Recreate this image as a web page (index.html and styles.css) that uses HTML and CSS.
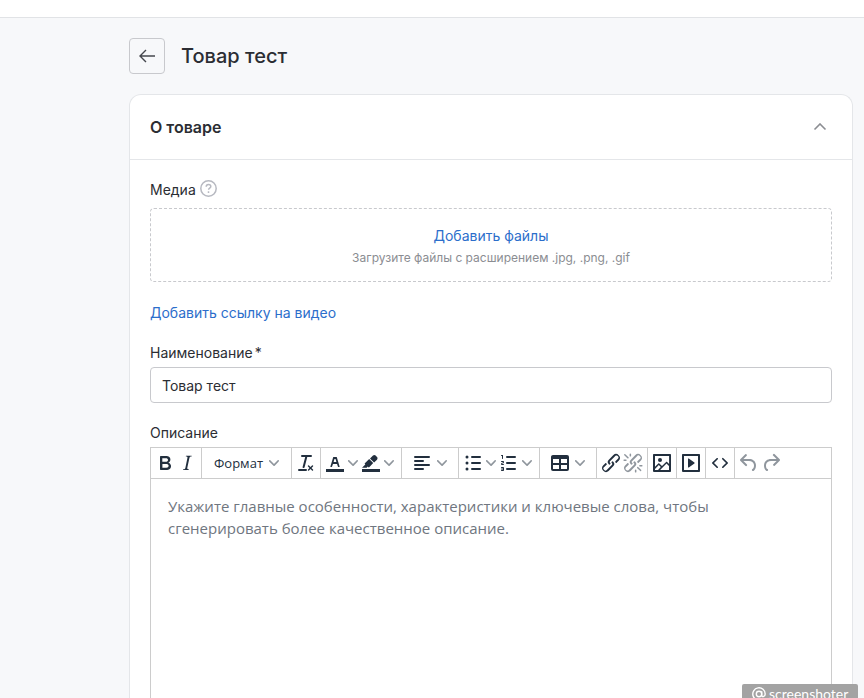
FILE: index.html
```html
<!DOCTYPE html>
<html lang="ru">
<head>
  <meta charset="UTF-8">
  <meta name="viewport" content="width=device-width, initial-scale=1.0">
  <title>Товар тест</title>
  <link rel="stylesheet" href="styles.css">
</head>
<body>
  <header class="topbar"></header>

  <main class="page">
    <div class="page-header">
      <button class="back-button" type="button" aria-label="Назад">
        <svg width="16" height="14" viewBox="0 0 16 14"><path d="M7 1L1 7l6 6M1 7h15"/></svg>
      </button>
      <h1>Товар тест</h1>
    </div>

    <section class="card">
      <div class="card-header">
        <h2>О товаре</h2>
        <button class="collapse-button" type="button" aria-label="Свернуть">
          <svg width="14" height="8" viewBox="0 0 14 8"><path d="M1.500 6.500l5.500-5.500 5.500 5.500"/></svg>
        </button>
      </div>

      <div class="card-body">
        <div class="field">
          <div class="label-row">
            <label for="files">Медиа</label>
            <svg class="help" width="17" height="17" viewBox="0 0 17 17">
              <circle cx="8.5" cy="8.5" r="7.7"/>
              <path d="M6.2 6.8c0-1.4 1-2.3 2.3-2.3s2.3.9 2.3 2.1c0 1.6-2.2 1.6-2.2 3.1M8.5 11.3v1.6"/>
            </svg>
          </div>
          <div class="dropzone">
            <button class="link-button" id="files" type="button">Добавить файлы</button>
            <span class="hint">Загрузите файлы с расширением .jpg, .png, .gif</span>
          </div>
        </div>

        <a class="video-link" href="#">Добавить ссылку на видео</a>

        <div class="field">
          <label for="name">Наименование<span class="required">*</span></label>
          <input class="text-input" type="text" id="name" value="Товар тест">
        </div>

        <div class="field editor-field">
          <label for="description">Описание</label>
          <div class="editor">
            <div class="toolbar">
              <div class="group">
                <button class="tool" type="button" aria-label="Полужирный">
                  <svg class="icon" viewBox="0 0 24 24"><path fill-rule="evenodd" d="M7.8 19c-.3 0-.5 0-.6-.2l-.2-.5V5.7c0-.2 0-.4.2-.5l.6-.2h5c1.5 0 2.7.3 3.5 1 .7.6 1.1 1.4 1.1 2.5a3 3 0 01-.6 1.9c-.4.6-1 1-1.6 1.2.4.1.9.3 1.3.6s.8.7 1 1.2c.4.4.5 1 .5 1.6 0 1.3-.4 2.3-1.3 3-.8.7-2.1 1-3.8 1H7.8zm5-8.3c.6 0 1.2-.1 1.6-.5.4-.3.6-.7.6-1.3 0-1.1-.8-1.7-2.3-1.7H9.3v3.5h3.4zm.5 6c.7 0 1.3-.1 1.7-.4.4-.4.6-.9.6-1.5s-.2-1-.7-1.4c-.4-.3-1-.4-2-.4H9.4v3.8h4z"/></svg>
                </button>
                <button class="tool" type="button" aria-label="Курсив">
                  <svg class="icon" viewBox="0 0 24 24"><path d="M16.7 4.7l-.1.9h-.3c-.6 0-1 0-1.4.3-.3.3-.4.6-.5 1.1l-2.1 9.8v.6c0 .5.4.8 1.4.8h.2l-.2.8H8l.2-.8h.2c1.1 0 1.8-.5 2-1.5l2-9.8.1-.5c0-.6-.4-.8-1.4-.8h-.3l.2-.9h5.8z"/></svg>
                </button>
              </div>
              <div class="group">
                <button class="tool format" type="button">Формат
                  <svg class="chevron" viewBox="0 0 10 10"><path d="M8.7 2.2c.3-.3.8-.3 1 0 .4.4.4.9 0 1.2L5.7 7.8c-.3.3-.9.3-1.2 0L.2 3.4a.8.8 0 010-1.2c.3-.3.8-.3 1.1 0L5 6l3.7-3.8z"/></svg>
                </button>
              </div>
              <div class="group">
                <button class="tool" type="button" aria-label="Очистить формат">
                  <svg class="icon" viewBox="0 0 24 24"><path d="M13.2 6a1 1 0 010 .2l-2.6 10a1 1 0 01-1 .8h-.2a.8.8 0 01-.8-1l2.6-10H8a1 1 0 110-2h9a1 1 0 010 2h-3.8zM5 18h7a1 1 0 010 2H5a1 1 0 010-2zm13 1.5L16.5 18 15 19.5a.7.7 0 01-1-1l1.5-1.5-1.5-1.5a.7.7 0 011-1l1.5 1.5 1.5-1.5a.7.7 0 011 1L17.5 17l1.5 1.5a.7.7 0 01-1 1z"/></svg>
                </button>
              </div>
              <div class="group pair">
                <button class="tool split" type="button" aria-label="Цвет текста">
                  <svg class="icon" viewBox="0 0 24 24"><path d="M3 18h18v3H3z"/><path fill-rule="evenodd" d="M8.7 16h-.8a.5.5 0 01-.5-.6l2.7-9c.1-.3.3-.4.5-.4h2.8c.2 0 .4.1.5.4l2.7 9a.5.5 0 01-.5.6h-.8a.5.5 0 01-.4-.4l-.7-2.2c0-.3-.3-.4-.5-.4h-3.4c-.2 0-.4.1-.5.4l-.7 2.2c0 .3-.2.4-.4.4zm2.6-7.6l-.6 2a.5.5 0 00.5.6h1.6a.5.5 0 00.5-.6l-.6-2c0-.3-.3-.4-.5-.4h-.4c-.2 0-.4.1-.5.4z"/></svg>
                  <svg class="chevron" viewBox="0 0 10 10"><path d="M8.7 2.2c.3-.3.8-.3 1 0 .4.4.4.9 0 1.2L5.7 7.8c-.3.3-.9.3-1.2 0L.2 3.4a.8.8 0 010-1.2c.3-.3.8-.3 1.1 0L5 6l3.7-3.8z"/></svg>
                </button>
                <button class="tool split" type="button" aria-label="Цвет фона">
                  <svg class="icon" viewBox="0 0 24 24"><path d="M3 18h18v3H3z"/><path d="M7.7 16.7H3l3.3-3.3-.7-.8L10.2 8l4 4.1-4 4.2c-.2.2-.6.2-.8 0l-.6-.7-1.1 1.1zm5-7.5L11 7.4l3-2.9a2 2 0 012.6 0L18 6c.7.7.7 2 0 2.7l-2.9 2.9-1.8-1.8-.5-.6"/></svg>
                  <svg class="chevron" viewBox="0 0 10 10"><path d="M8.7 2.2c.3-.3.8-.3 1 0 .4.4.4.9 0 1.2L5.7 7.8c-.3.3-.9.3-1.2 0L.2 3.4a.8.8 0 010-1.2c.3-.3.8-.3 1.1 0L5 6l3.7-3.8z"/></svg>
                </button>
              </div>
              <div class="group">
                <button class="tool menu" type="button" aria-label="Выравнивание">
                  <svg class="icon" viewBox="0 0 24 24"><path d="M5 5h14a1 1 0 010 2H5a1 1 0 110-2zm0 4h8a1 1 0 010 2H5a1 1 0 110-2zm0 4h14a1 1 0 010 2H5a1 1 0 010-2zm0 4h8a1 1 0 010 2H5a1 1 0 010-2z"/></svg>
                  <svg class="chevron" viewBox="0 0 10 10"><path d="M8.7 2.2c.3-.3.8-.3 1 0 .4.4.4.9 0 1.2L5.7 7.8c-.3.3-.9.3-1.2 0L.2 3.4a.8.8 0 010-1.2c.3-.3.8-.3 1.1 0L5 6l3.7-3.8z"/></svg>
                </button>
              </div>
              <div class="group pair">
                <button class="tool split" type="button" aria-label="Маркированный список">
                  <svg class="icon" viewBox="0 0 24 24"><path d="M11 5h8a1 1 0 010 2h-8a1 1 0 010-2zm0 6h8a1 1 0 010 2h-8a1 1 0 010-2zm0 6h8a1 1 0 010 2h-8a1 1 0 010-2z"/><circle cx="6" cy="6" r="1.5"/><circle cx="6" cy="12" r="1.5"/><circle cx="6" cy="18" r="1.5"/></svg>
                  <svg class="chevron" viewBox="0 0 10 10"><path d="M8.7 2.2c.3-.3.8-.3 1 0 .4.4.4.9 0 1.2L5.7 7.8c-.3.3-.9.3-1.2 0L.2 3.4a.8.8 0 010-1.2c.3-.3.8-.3 1.1 0L5 6l3.7-3.8z"/></svg>
                </button>
                <button class="tool split" type="button" aria-label="Нумерованный список">
                  <svg class="icon" viewBox="0 0 24 24"><path d="M10 17h8a1 1 0 010 2h-8a1 1 0 010-2zm0-6h8a1 1 0 010 2h-8a1 1 0 010-2zm0-6h8a1 1 0 010 2h-8a1 1 0 110-2zM6 4v3.5c0 .3-.2.5-.5.5a.5.5 0 01-.5-.5V5h-.5a.5.5 0 010-1H6zm-1 8.8l.2.2h1.3c.3 0 .5.2.5.5s-.2.5-.5.5H4.9a1 1 0 01-.9-1V13c0-.4.3-.8.6-1l1.2-.4.2-.3a.2.2 0 00-.2-.2H4.5a.5.5 0 01-.5-.5c0-.3.2-.5.5-.5h1.6c.5 0 .9.4.9 1v.1c0 .4-.3.8-.6 1l-1.2.4-.2.3zM7 17v2c0 .6-.4 1-1 1H4.5a.5.5 0 010-1h1.2c.2 0 .3-.1.3-.3 0-.2-.1-.3-.3-.3H4.4a.4.4 0 110-.8h1.3c.2 0 .3-.1.3-.3 0-.2-.1-.3-.3-.3H4.5a.5.5 0 110-1H6c.6 0 1 .4 1 1z"/></svg>
                  <svg class="chevron" viewBox="0 0 10 10"><path d="M8.7 2.2c.3-.3.8-.3 1 0 .4.4.4.9 0 1.2L5.7 7.8c-.3.3-.9.3-1.2 0L.2 3.4a.8.8 0 010-1.2c.3-.3.8-.3 1.1 0L5 6l3.7-3.8z"/></svg>
                </button>
              </div>
              <div class="group">
                <button class="tool menu" type="button" aria-label="Таблица">
                  <svg class="icon" viewBox="0 0 24 24"><path fill-rule="evenodd" d="M19 4a2 2 0 012 2v12a2 2 0 01-2 2H5a2 2 0 01-2-2V6c0-1.1.9-2 2-2h14zM5 14v4h6v-4H5zm14 0h-6v4h6v-4zm0-6h-6v4h6V8zM5 12h6V8H5v4z"/></svg>
                  <svg class="chevron" viewBox="0 0 10 10"><path d="M8.7 2.2c.3-.3.8-.3 1 0 .4.4.4.9 0 1.2L5.7 7.8c-.3.3-.9.3-1.2 0L.2 3.4a.8.8 0 010-1.2c.3-.3.8-.3 1.1 0L5 6l3.7-3.8z"/></svg>
                </button>
              </div>
              <div class="group">
                <button class="tool" type="button" aria-label="Ссылка">
                  <svg class="icon" viewBox="0 0 24 24"><path d="M6.2 12.3a1 1 0 011.4 1.4l-2.1 2a2 2 0 102.7 2.8l4.8-4.8a1 1 0 000-1.4 1 1 0 111.4-1.3 2.9 2.9 0 010 4L9.6 20a3.9 3.9 0 01-5.5-5.5l2-2zm11.6-.6a1 1 0 01-1.4-1.4l2-2a2 2 0 10-2.6-2.8L11 10.3a1 1 0 000 1.4A1 1 0 119.6 13a2.9 2.9 0 010-4L14.4 4a3.9 3.9 0 015.5 5.5l-2 2z"/></svg>
                </button>
                <button class="tool" type="button" aria-label="Удалить ссылку" disabled>
                  <svg class="icon" viewBox="0 0 24 24"><path d="M6.2 12.3a1 1 0 011.4 1.4l-2 2a2 2 0 102.6 2.8l4.8-4.8a1 1 0 000-1.4 1 1 0 111.4-1.3 2.9 2.9 0 010 4L9.6 20a3.9 3.9 0 01-5.5-5.5l2-2zm11.6-.6a1 1 0 01-1.4-1.4l2.1-2a2 2 0 10-2.7-2.8L11 10.3a1 1 0 000 1.4A1 1 0 119.6 13a2.9 2.9 0 010-4L14.4 4a3.9 3.9 0 015.5 5.5l-2 2zM7.6 6.3a.8.8 0 01-1 1.1L3.3 4.2a.7.7 0 111-1l3.2 3.1zM5.1 8.6a.8.8 0 010 1.5H3a.8.8 0 010-1.5H5zm5-3.5a.8.8 0 01-1.5 0V3a.8.8 0 011.5 0V5zm6 11.8a.8.8 0 011-1l3.2 3.2a.8.8 0 01-1 1L16 17zm-2.2 2a.8.8 0 011.5 0V21a.8.8 0 01-1.5 0V19zm5-3.5a.7.7 0 110-1.5H21a.8.8 0 010 1.5H19z"/></svg>
                </button>
              </div>
              <div class="group">
                <button class="tool" type="button" aria-label="Изображение">
                  <svg class="icon" viewBox="0 0 24 24"><path fill-rule="evenodd" d="M5 15.7l3.3-3.2c.3-.3.7-.3 1 0L12 15l4.1-4c.3-.4.8-.4 1 0l2 1.9V5H5v10.7zM5 18V19h3l2.8-2.9-2-2L5 17.9zm14-3l-2.5-2.4-6.4 6.5H19v-4zM4 3h16c.6 0 1 .4 1 1v16c0 .6-.4 1-1 1H4a1 1 0 01-1-1V4c0-.6.4-1 1-1z"/><circle cx="10" cy="9" r="2"/></svg>
                </button>
              </div>
              <div class="group">
                <button class="tool" type="button" aria-label="Видео">
                  <svg class="icon" viewBox="0 0 24 24"><path fill-rule="evenodd" d="M4 3h16c.6 0 1 .4 1 1v16c0 .6-.4 1-1 1H4a1 1 0 01-1-1V4c0-.6.4-1 1-1zm1 2v14h14V5H5zm4.8 2.6l5.6 4a.5.5 0 010 .8l-5.6 4A.5.5 0 019 16V8a.5.5 0 01.8-.4z"/></svg>
                </button>
              </div>
              <div class="group">
                <button class="tool" type="button" aria-label="Исходный код">
                  <svg class="icon" viewBox="0 0 24 24"><path d="M9.8 15.7c.3.3.3.8 0 1-.3.4-.9.4-1.2 0l-4.4-4.1a.8.8 0 010-1.2l4.4-4.2c.3-.3.9-.3 1.2 0 .3.3.3.8 0 1.1L6 12l3.8 3.7zM14.2 15.7c-.3.3-.3.8 0 1 .4.4.9.4 1.2 0l4.4-4.1c.3-.3.3-.9 0-1.2l-4.4-4.2a.8.8 0 00-1.2 0c-.3.3-.3.8 0 1.1L18 12l-3.8 3.7z"/></svg>
                </button>
              </div>
              <div class="group">
                <button class="tool" type="button" aria-label="Отменить" disabled>
                  <svg class="icon" viewBox="0 0 24 24"><path d="M6.4 8H12c3.7 0 6.2 2 6.8 5.1.6 2.7-.4 5.6-2.3 6.8a1 1 0 01-1-1.8c1.1-.6 1.8-2.7 1.4-4.6-.5-2.1-2.1-3.5-4.9-3.5H6.4l3.3 3.3a1 1 0 11-1.4 1.4l-5-5a1 1 0 010-1.4l5-5a1 1 0 011.4 1.4L6.4 8z"/></svg>
                </button>
                <button class="tool" type="button" aria-label="Повторить" disabled>
                  <svg class="icon" viewBox="0 0 24 24"><path d="M17.6 10H12c-2.8 0-4.4 1.4-4.9 3.5-.4 2 .3 4 1.4 4.6a1 1 0 11-1 1.8c-2-1.2-2.9-4.1-2.3-6.8.6-3 3-5.1 6.8-5.1h5.6l-3.3-3.3a1 1 0 111.4-1.4l5 5a1 1 0 010 1.4l-5 5a1 1 0 01-1.4-1.4l3.3-3.3z"/></svg>
                </button>
              </div>
            </div>
            <textarea class="editor-text" id="description" placeholder="Укажите главные особенности, характеристики и ключевые слова, чтобы сгенерировать более качественное описание."></textarea>
          </div>
        </div>
      </div>
    </section>
  </main>

  <div class="watermark">
    <svg width="14" height="14" viewBox="0 0 14 14"><circle cx="7" cy="7" r="2.7"/><path d="M9.7 4.3v3.9c0 2 3.5 2 3.5-1.2A6.2 6.2 0 1010 12.4"/></svg>
    <span>screenshoter</span>
  </div>
</body>
</html>
```

FILE: styles.css
```css
* {
  box-sizing: border-box;
}
body {
  display: flex;
  flex-direction: column;
  height: 100vh;
  margin: 0;
  overflow: hidden; /* The form continues below the fold */
  background-color: #f7f8fa;
  color: #2b2d33;
  font-family: Inter, "Liberation Sans", sans-serif;
  font-size: 14px;
  line-height: 20px;
}
button, input, textarea {
  margin: 0;
  font: inherit;
  color: inherit;
}
button {
  padding: 0;
  border: none;
  background: none;
  cursor: pointer;
}
svg {
  display: block;
  flex: none;
}

.topbar {
  flex: none;
  height: 18px;
  background-color: #fff;
  border-bottom: 1px solid #e1e3e6;
}
.page {
  display: flex;
  flex-direction: column;
  flex: 1;
  min-height: 0;
  padding: 20px 11px 0 129px;
}
.page-header {
  display: flex;
  align-items: center;
  gap: 16px;
  margin-bottom: 20px;
}
.back-button {
  display: flex;
  align-items: center;
  justify-content: center;
  width: 36px;
  height: 36px;
  border: 1px solid #c8c9cd;
  border-radius: 4px;
}
.back-button svg,
.collapse-button svg {
  fill: none;
  stroke: #45474d;
  stroke-width: 1.4;
}
h1 {
  margin: 0;
  font-size: 20px;
  line-height: 28px;
  font-weight: 500;
}

/* Card */
.card {
  display: flex;
  flex-direction: column;
  flex: 1;
  background-color: #fff;
  border: 1px solid #e4e6e9;
  border-bottom: none;
  border-radius: 12px 12px 0 0;
}
.card-header {
  display: flex;
  align-items: center;
  justify-content: space-between;
  height: 65px;
  padding: 0 20px;
  border-bottom: 1px solid #e4e6e9;
}
h2 {
  margin: 0;
  font-size: 16px;
  line-height: 24px;
  font-weight: 600;
}
.collapse-button {
  display: flex;
  align-items: center;
  justify-content: center;
  width: 24px;
  height: 24px;
}
.collapse-button svg {
  stroke: #8b8d92;
  stroke-width: 1.6;
}
.card-body {
  display: flex;
  flex-direction: column;
  flex: 1;
  gap: 20px;
  padding: 20px 20px 0;
}
.field {
  display: flex;
  flex-direction: column;
  gap: 4px;
}
.label-row {
  display: flex;
  gap: 4px;
  height: 24px;
}
.help {
  fill: none;
  stroke: #b7b9c1;
  stroke-width: 1.5;
}
.required {
  margin-left: 2px;
}
.dropzone {
  display: flex;
  flex-direction: column;
  align-items: center;
  gap: 4px;
  padding: 17px 16px 15px;
  border: 1px dashed #c8c9cd;
  border-radius: 4px;
}
.link-button,
.video-link {
  color: #2c6ecb;
  text-decoration: none;
}
.video-link {
  align-self: flex-start;
  line-height: 21px;
}
.hint {
  color: #8b8d92;
  font-size: 12px;
  line-height: 16px;
}
.text-input {
  width: 100%;
  height: 36px;
  padding: 0 11px;
  border: 1px solid #c8c9cd;
  border-radius: 4px;
  background-color: #fff;
}

/* Text editor */
.editor-field {
  flex: 1;
}
.editor {
  display: flex;
  flex-direction: column;
  flex: 1;
  border: 1px solid #ccc;
  border-bottom: none;
}
.toolbar {
  display: flex;
  flex-wrap: wrap;
  border-bottom: 1px solid #ccc;
  color: #222f3e;
}
.group {
  display: flex;
  height: 30px;
  padding: 0 3px;
  border-right: 1px solid #ccc;
}
.group:last-child {
  border-right: none;
}
.pair {
  padding: 0 6px 0 2px;
}
.tool {
  display: flex;
  align-items: center;
  justify-content: center;
  width: 22px;
}
.tool:disabled {
  opacity: 0.5;
}
.icon {
  width: 24px;
  height: 24px;
  fill: #222f3e;
}
.chevron {
  width: 10px;
  height: 10px;
  fill: #222f3e;
  opacity: 0.5;
}
.split {
  justify-content: flex-start;
  width: 36px;
  gap: 1px;
}
.menu {
  justify-content: flex-start;
  width: 50px;
  gap: 3px;
  padding-left: 5px;
}
.format {
  width: 83px;
  gap: 6px;
  font-family: "Open Sans", "Noto Sans", sans-serif;
  font-size: 13px;
}
.editor-text {
  flex: 1;
  width: 100%;
  padding: 16px 17px;
  border: none;
  outline: none;
  resize: none;
  font-family: "Open Sans", "Noto Sans", sans-serif;
  font-size: 15px;
  line-height: 22px;
}
.editor-text::placeholder {
  color: #6f7680;
}

.watermark {
  position: fixed;
  right: 6px;
  bottom: 0;
  display: flex;
  gap: 3px;
  width: 116px;
  height: 14px;
  padding: 3px 10px 0;
  overflow: hidden;
  border-radius: 2px 2px 0 0;
  background-color: #a3a3a3;
  color: #fff;
  font-family: Lato, sans-serif;
  font-size: 14px;
  line-height: 14px;
}
.watermark svg {
  fill: none;
  stroke: #fff;
  stroke-width: 1.4;
}
```
